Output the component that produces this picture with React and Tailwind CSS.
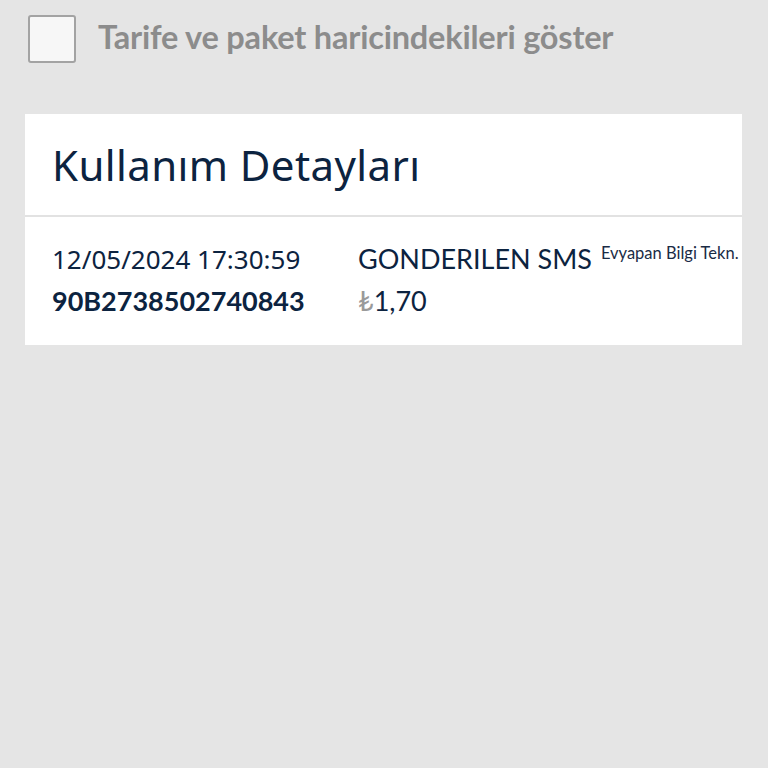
import React from "react";

const App = () => {
  return (
    <div className="min-h-screen w-full bg-[#e5e5e5] font-['Lato','Noto_Sans',sans-serif]">
      <div className="flex items-center gap-[22px] pl-[28px] pt-[15px]">
        <div className="w-[48px] h-[48px] rounded-[3px] border-2 border-[#a3a3a3] bg-[#f7f7f7]" />
        <span className="text-[32.5px] font-bold text-[#8c8c8c] leading-none tracking-[-0.2px] -mt-[4px]">
          Tarife ve paket haricindekileri göster
        </span>
      </div>

      <div className="mx-[25px] mt-[51px] w-[717px] bg-white">
        <div className="h-[103px] flex items-center px-[27px] border-b-2 border-[#e2e2e2]">
          <h1 className="text-[42px] leading-none text-[#0c2340] font-normal font-['Noto_Sans',sans-serif] tracking-[0.4px]">
            Kullanım Detayları
          </h1>
        </div>
        <div className="flex pl-[27px] pt-[27px] pb-[29px] overflow-hidden">
          <div className="w-[306px] flex flex-col gap-[12px]">
            <span className="text-[26px] leading-[30px] text-[#0c2340] font-['Noto_Sans',sans-serif]">
              12/05/2024 17:30:59
            </span>
            <span className="text-[27px] leading-[30px] font-bold text-[#0c2340]">90B2738502740843</span>
          </div>
          <div className="flex flex-col gap-[12px]">
            <div className="flex items-start gap-[9px] whitespace-nowrap">
              <span className="text-[27px] leading-[30px] text-[#0c2340]">GONDERILEN SMS</span>
              <span className="text-[16.5px] leading-[18px] text-[#1a2b45]">Evyapan Bilgi Tekn.</span>
            </div>
            <span className="text-[27px] leading-[30px] text-[#0c2340]">
              <span className="text-[#9a9a9a]">₺</span>1,70
            </span>
          </div>
        </div>
      </div>
    </div>
  );
};

export default App;
